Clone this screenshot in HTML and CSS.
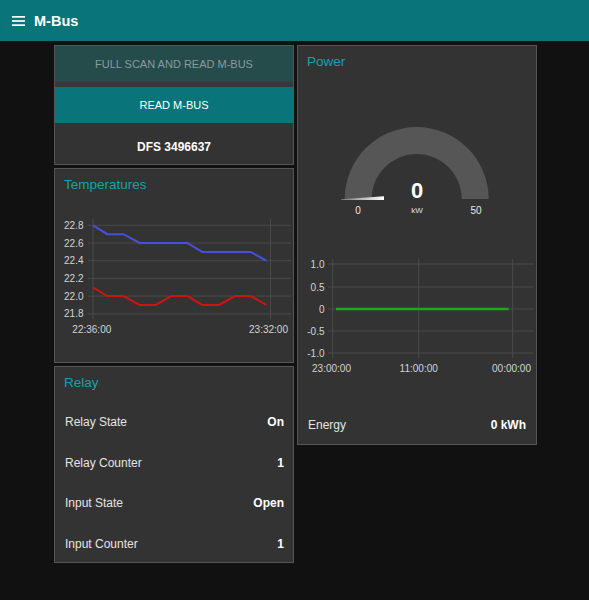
FILE: index.html
```html
<!DOCTYPE html>
<html>
<head>
<meta charset="utf-8">
<title>M-Bus</title>
<link rel="stylesheet" href="styles.css">
</head>
<body>
<header class="topbar">
  <svg class="menu-icon" viewBox="0 0 13 10" aria-hidden="true">
    <rect x="0" y="0" width="13" height="1.7"/>
    <rect x="0" y="4.15" width="13" height="1.7"/>
    <rect x="0" y="8.3" width="13" height="1.7"/>
  </svg>
  <span class="app-title">M-Bus</span>
</header>
<main class="content">
  <div class="column">
    <section class="card card-controls">
      <button class="btn btn-disabled" disabled>FULL SCAN AND READ M-BUS</button>
      <div class="spacer"></div>
      <button class="btn btn-primary">READ M-BUS</button>
      <div class="device">DFS 3496637</div>
    </section>
    <section class="card card-temp">
      <div class="card-title">Temperatures</div>
      <svg class="chart" width="238" height="164" viewBox="0 0 238 164">
        <g class="grid">
          <line x1="33" y1="26.3" x2="236" y2="26.3"/>
          <line x1="33" y1="44" x2="236" y2="44"/>
          <line x1="33" y1="61.7" x2="236" y2="61.7"/>
          <line x1="33" y1="79.4" x2="236" y2="79.4"/>
          <line x1="33" y1="97.1" x2="236" y2="97.1"/>
          <line x1="33" y1="114.9" x2="236" y2="114.9"/>
          <line x1="38" y1="20" x2="38" y2="120"/>
          <line x1="215.5" y1="20" x2="215.5" y2="120"/>
        </g>
        <g class="tick-y">
          <text x="28.5" y="29.8">22.8</text>
          <text x="28.5" y="47.5">22.6</text>
          <text x="28.5" y="65.2">22.4</text>
          <text x="28.5" y="82.9">22.2</text>
          <text x="28.5" y="100.6">22.0</text>
          <text x="28.5" y="118.4">21.8</text>
        </g>
        <g class="tick-x">
          <text x="36.8" y="133.8">22:36:00</text>
          <text x="213.5" y="133.8">23:32:00</text>
        </g>
        <polyline class="line-blue" points="38,26.3 52.3,35.2 68.3,35.2 84.7,44 132.3,44 147.3,52.9 195.7,52.9 211.3,61.7"/>
        <polyline class="line-red" points="38,88.3 52.3,97.1 68.3,97.1 84.7,105.9 100.7,105.9 116.3,97.1 132.3,97.1 147.3,105.9 164,105.9 180,97.1 195.7,97.1 211.3,105.9"/>
      </svg>
    </section>
    <section class="card card-relay">
      <div class="card-title">Relay</div>
      <div class="rows">
        <div class="row"><span class="label">Relay State</span><span class="value">On</span></div>
        <div class="row"><span class="label">Relay Counter</span><span class="value">1</span></div>
        <div class="row"><span class="label">Input State</span><span class="value">Open</span></div>
        <div class="row"><span class="label">Input Counter</span><span class="value">1</span></div>
      </div>
    </section>
  </div>
  <div class="column">
    <section class="card card-power">
      <div class="card-title">Power</div>
      <svg class="chart" width="238" height="330" viewBox="0 0 238 330">
        <defs>
          <linearGradient id="needle" x1="0" y1="0" x2="1" y2="0">
            <stop offset="0" stop-color="#777"/>
            <stop offset="1" stop-color="#fff"/>
          </linearGradient>
        </defs>
        <path class="gauge-arc" d="M46.7 123 A72 72 0 0 1 190.7 123 L163.7 123 A45 45 0 0 0 73.7 123 Z"/>
        <polygon points="43,123.2 86,120.3 86,124 43,124" fill="url(#needle)"/>
        <text class="gauge-value" x="119" y="121.5">0</text>
        <text class="gauge-unit" x="119" y="136.8">kW</text>
        <text class="gauge-limit" x="60" y="137.5">0</text>
        <text class="gauge-limit" x="178" y="137.5">50</text>

        <g class="grid">
          <line x1="30" y1="188" x2="236" y2="188"/>
          <line x1="30" y1="211" x2="236" y2="211"/>
          <line x1="30" y1="233" x2="236" y2="233"/>
          <line x1="30" y1="255" x2="236" y2="255"/>
          <line x1="30" y1="277" x2="236" y2="277"/>
          <line x1="34.7" y1="183" x2="34.7" y2="282"/>
          <line x1="120.7" y1="183" x2="120.7" y2="282"/>
          <line x1="214.7" y1="183" x2="214.7" y2="282"/>
        </g>
        <g class="tick-y">
          <text x="26.5" y="191.5">1.0</text>
          <text x="26.5" y="214.5">0.5</text>
          <text x="26.5" y="236.5">0</text>
          <text x="26.5" y="258.5">-0.5</text>
          <text x="26.5" y="280.5">-1.0</text>
        </g>
        <g class="tick-x">
          <text x="33.5" y="295.5">23:00:00</text>
          <text x="120.7" y="295.5">11:00:00</text>
          <text x="213.5" y="295.5">00:00:00</text>
        </g>
        <line class="line-green" x1="38" y1="233" x2="210.7" y2="233"/>
      </svg>
      <div class="row energy"><span class="label">Energy</span><span class="value">0 kWh</span></div>
    </section>
  </div>
</main>
</body>
</html>
```

FILE: styles.css
```css
* {
  box-sizing: border-box;
}

body {
  margin: 0;
  background: #111111;
  font-family: "Liberation Sans", Arial, sans-serif;
  color: #e8e8e8;
}

.topbar {
  height: 41px;
  background: #097479;
  display: flex;
  align-items: center;
  padding-left: 12px;
  gap: 9px;
}

.menu-icon {
  width: 13px;
  height: 10px;
  fill: #ffffff;
  margin-top: 1px;
}

.app-title {
  font-size: 14.5px;
  font-weight: bold;
  color: #ffffff;
}

.content {
  display: flex;
  align-items: flex-start;
  gap: 3px;
  padding: 4px 0 0 54px;
}

.column {
  width: 240px;
  display: flex;
  flex-direction: column;
  gap: 3px;
}

.card {
  background: #333333;
  border: 1px solid #555555;
  overflow: hidden;
}

.card-controls {
  height: 120px;
  display: flex;
  flex-direction: column;
}

.btn {
  display: block;
  width: 100%;
  height: 36px;
  margin: 0;
  padding: 0;
  border: 0;
  font-family: "Liberation Sans", Arial, sans-serif;
  font-size: 11px;
}

.btn-disabled {
  background: #254c4b;
  color: #8a9a9a;
}

.btn-primary {
  background: #097479;
  color: #ffffff;
}

.spacer {
  height: 5px;
  background: #383838;
}

.device {
  flex: 1;
  display: flex;
  align-items: center;
  justify-content: center;
  padding-top: 6px;
  font-size: 12px;
  font-weight: bold;
  color: #ffffff;
}

.card-temp {
  height: 195px;
}

.card-relay {
  height: 197px;
}

.card-power {
  height: 400px;
}

.card-title {
  height: 30px;
  padding: 7px 9px 6px;
  line-height: 17px;
  font-size: 13.5px;
  color: #16a2aa;
}

.chart {
  display: block;
}

.grid line {
  stroke: #4a4a4a;
  stroke-width: 1;
}

.tick-y text,
.tick-x text {
  font-family: "Liberation Sans", Arial, sans-serif;
  font-size: 10px;
  fill: #d4d4d4;
}

.tick-y text {
  text-anchor: end;
}

.tick-x text {
  text-anchor: middle;
}

.line-blue {
  fill: none;
  stroke: #4650e0;
  stroke-width: 2;
}

.line-red {
  fill: none;
  stroke: #cc1410;
  stroke-width: 2;
}

.line-green {
  stroke: #1ba81b;
  stroke-width: 2.5;
}

.gauge-arc {
  fill: #565656;
}

.gauge-value {
  font-family: "Liberation Sans", Arial, sans-serif;
  font-size: 22px;
  font-weight: bold;
  fill: #ffffff;
  text-anchor: middle;
}

.gauge-unit {
  font-family: "Liberation Sans", Arial, sans-serif;
  font-size: 8px;
  fill: #e0e0e0;
  text-anchor: middle;
}

.gauge-limit {
  font-family: "Liberation Sans", Arial, sans-serif;
  font-size: 10px;
  fill: #e8e8e8;
  text-anchor: middle;
}

.rows {
  padding-top: 5px;
}

.row {
  height: 40.6px;
  display: flex;
  align-items: center;
  justify-content: space-between;
  padding: 0 9px 0 10px;
  font-size: 12px;
}

.row .label {
  color: #e4e4e4;
}

.row .value {
  font-weight: bold;
  color: #ffffff;
}

.energy {
  height: 38px;
  padding: 0 10px;
}
```
